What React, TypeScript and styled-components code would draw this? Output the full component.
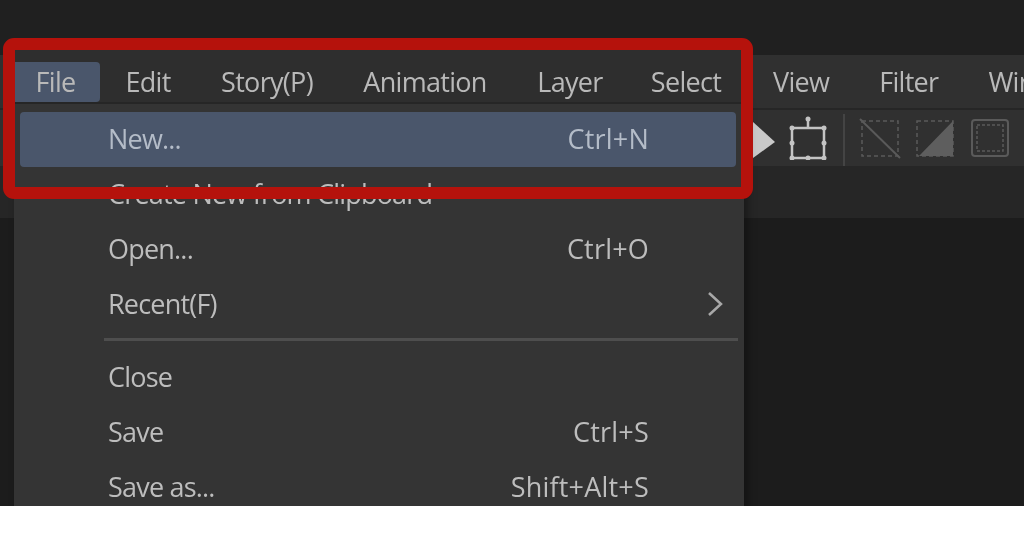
import React from "react";
import styled, { createGlobalStyle } from "styled-components";

const GlobalStyle = createGlobalStyle`
    html, body {
        margin: 0;
        background: #fff;
        font-family: "Open Sans", "Noto Sans", sans-serif;
    }
`
const Screen = styled.div`
    position: relative;
    width: 1024px;
    height: 506px;
    overflow: hidden;
    background: #1c1c1c;
    display: flex;
    flex-direction: column;
`
const TopStrip = styled.div`
    height: 55px;
    background: #202020;
`
const MenuBar = styled.div`
    height: 55px;
    background: #303030;
    border-bottom: 2px solid #262626;
    box-sizing: border-box;
    display: flex;
    align-items: center;
    padding-left: 773px;
    gap: 50px;
    white-space: nowrap;
    overflow: hidden;
`
const MenuLabel = styled.span`
    font-size: 27px;
    letter-spacing: -0.7px;
    color: #b9b9b9;
    filter: blur(0.4px);
`
const Toolbar = styled.div`
    height: 56px;
    background: #303030;
    display: flex;
    align-items: center;
    padding-left: 740px;
`
const ToolIcon = styled.svg<{ $gap?: number }>`
    flex: none;
    margin-left: ${props => props.$gap ?? 0}px;
    filter: blur(0.4px);
`
const ToolDivider = styled.div`
    width: 2px;
    align-self: flex-end;
    height: 52px;
    margin-left: 16px;
    background: #444;
`
const SubBar = styled.div`
    height: 52px;
    background: #262626;
`
const Dropdown = styled.div`
    position: absolute;
    left: 14px;
    top: 104px;
    width: 730px;
    height: 420px;
    box-sizing: border-box;
    padding: 8px 8px 0 6px;
    background: #343434;
    box-shadow: 4px 0 8px rgba(0, 0, 0, 0.35);
`
const DropdownTabs = styled.div`
    position: absolute;
    left: 0;
    top: -54px;
    width: 730px;
    height: 54px;
    background: #2e2e2e;
    border-bottom: 2px solid #262626;
    box-sizing: border-box;
    display: flex;
    align-items: flex-start;
    padding-top: 12px;
    white-space: nowrap;
`
const Tab = styled.span<{ $active?: boolean; $width: number }>`
    flex: none;
    width: ${props => props.$width}px;
    height: 40px;
    line-height: 40px;
    text-align: center;
    box-sizing: border-box;
    padding-right: ${props => props.$active ? 3 : 0}px;
    border-radius: 0 4px 4px 0;
    background: ${props => props.$active ? "#4a566b" : "transparent"};
    font-size: 27px;
    letter-spacing: -0.7px;
    color: #b9b9b9;
    & > span { filter: blur(0.4px); }
`
const Row = styled.div<{ $active?: boolean }>`
    height: 55px;
    box-sizing: border-box;
    padding: 0 87px 2px 88px;
    display: flex;
    align-items: center;
    justify-content: space-between;
    position: relative;
    border-radius: 4px;
    background: ${props => props.$active ? "#4a566b" : "transparent"};
    font-size: 27px;
    letter-spacing: -0.8px;
    color: ${props => props.$active ? "#b4bcc8" : "#bdbdbd"};
    & > span { filter: blur(0.4px); }
`
const Shortcut = styled.span`
    letter-spacing: 0.2px;
`
const Arrow = styled.svg`
    position: absolute;
    right: 12px;
    top: 14px;
`
const Separator = styled.div`
    height: 3px;
    margin: 6px -2px 9px 84px;
    background: #4e4e4e;
`
const Highlight = styled.div`
    position: absolute;
    left: 3px;
    top: 38px;
    width: 750px;
    height: 161px;
    box-sizing: border-box;
    border: 12px solid #b5120c;
    border-radius: 11px;
`
const Footer = styled.div`
    height: 30px;
    background: #fff;
`

const tabs = [
    { label: "File", width: 86 },
    { label: "Edit", width: 96 },
    { label: "Story(P)", width: 142 },
    { label: "Animation", width: 174 },
    { label: "Layer", width: 116 },
    { label: "Select", width: 116 },
]

const firstRows = [
    { label: "New...", shortcut: "Ctrl+N", active: true },
    { label: "Create New from Clipboard" },
    { label: "Open...", shortcut: "Ctrl+O" },
    { label: "Recent(F)", submenu: true },
]

const secondRows = [
    { label: "Close" },
    { label: "Save", shortcut: "Ctrl+S" },
    { label: "Save as...", shortcut: "Shift+Alt+S" },
]

function App() {
    return (
        <>
            <GlobalStyle />
            <Screen>
                <TopStrip />
                <MenuBar>
                    <MenuLabel>View</MenuLabel>
                    <MenuLabel>Filter</MenuLabel>
                    <MenuLabel>Window</MenuLabel>
                </MenuBar>
                <Toolbar>
                    <ToolIcon width="36" height="40" viewBox="0 0 36 40">
                        <path d="M13 4 L35 24 L13 40 L0 30 Z" fill="#c9c9c9" />
                    </ToolIcon>
                    <ToolIcon $gap={13} width="38" height="44" viewBox="0 0 38 44" fill="none" stroke="#c4c4c4">
                        <rect x="3" y="12" width="32" height="30" strokeWidth="2.5" />
                        <path d="M19 3 V12" strokeWidth="2.5" />
                        <g fill="#c4c4c4" stroke="none">
                            <circle cx="19" cy="3" r="2.5" />
                            <circle cx="3" cy="27" r="2.5" />
                            <circle cx="35" cy="27" r="2.5" />
                            <circle cx="19" cy="42" r="2.5" />
                            <circle cx="3" cy="42" r="2.5" />
                            <circle cx="35" cy="42" r="2.5" />
                            <circle cx="3" cy="12" r="2.5" />
                            <circle cx="35" cy="12" r="2.5" />
                        </g>
                    </ToolIcon>
                    <ToolDivider />
                    <ToolIcon $gap={14} width="42" height="42" viewBox="0 0 42 42" fill="none" stroke="#5a5a5a" strokeWidth="1.5">
                        <rect x="3" y="4" width="36" height="35" strokeDasharray="4 3" />
                        <path d="M1 2 L41 41" strokeWidth="2" />
                    </ToolIcon>
                    <ToolIcon $gap={14} width="40" height="42" viewBox="0 0 40 42" fill="none" stroke="#5a5a5a" strokeWidth="1.5">
                        <rect x="2" y="4" width="36" height="35" strokeDasharray="4 3" />
                        <path d="M38 4 V39 H4 Z" fill="#5e5e5e" stroke="none" />
                    </ToolIcon>
                    <ToolIcon $gap={16} width="38" height="40" viewBox="0 0 38 40" fill="none" stroke="#5a5a5a" strokeWidth="2">
                        <rect x="1" y="2" width="36" height="36" rx="3" />
                        <rect x="6" y="7" width="26" height="26" strokeWidth="1.5" strokeDasharray="3 2" />
                    </ToolIcon>
                </Toolbar>
                <SubBar />
                <Dropdown>
                    <DropdownTabs>
                        {tabs.map(tab => (
                            <Tab key={tab.label} $width={tab.width} $active={tab.label === "File"}>
                                <span>{tab.label}</span>
                            </Tab>
                        ))}
                    </DropdownTabs>
                    {firstRows.map(row => (
                        <Row key={row.label} $active={row.active}>
                            <span>{row.label}</span>
                            {row.shortcut && <Shortcut>{row.shortcut}</Shortcut>}
                            {row.submenu && (
                                <Arrow width="18" height="26" viewBox="0 0 18 26" fill="none" stroke="#a8a8a8" strokeWidth="2.5">
                                    <path d="M3 2 L15 13 L3 24" />
                                </Arrow>
                            )}
                        </Row>
                    ))}
                    <Separator />
                    {secondRows.map(row => (
                        <Row key={row.label}>
                            <span>{row.label}</span>
                            {row.shortcut && <Shortcut>{row.shortcut}</Shortcut>}
                        </Row>
                    ))}
                </Dropdown>
                <Highlight />
            </Screen>
            <Footer />
        </>
    )
}

export default App;
